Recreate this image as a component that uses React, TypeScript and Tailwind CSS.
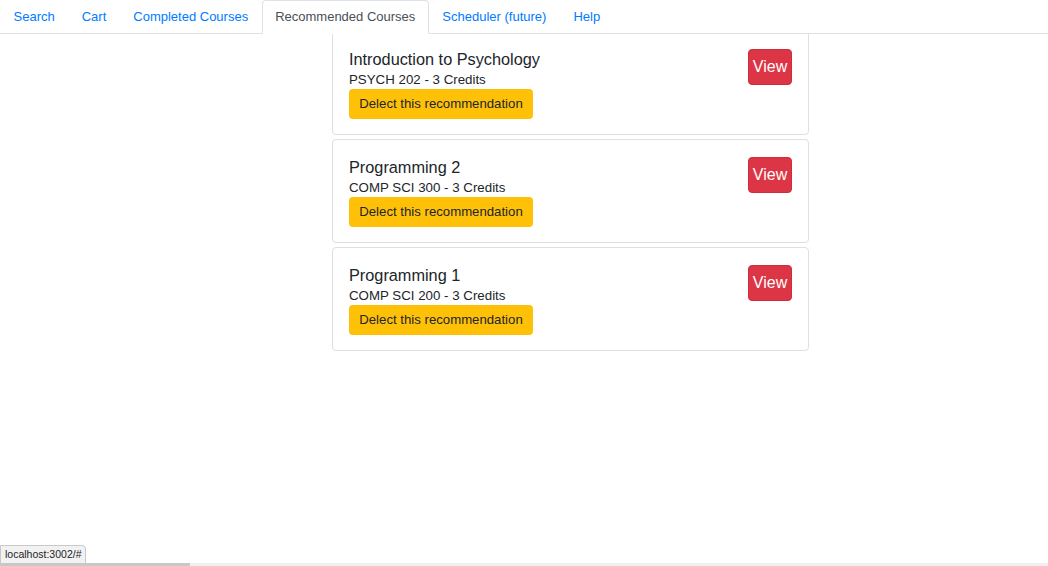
import React from "react";

const tabs = ["Search", "Cart", "Completed Courses", "Recommended Courses", "Scheduler (future)", "Help"];

const courses = [
  { name: "Introduction to Psychology", code: "PSYCH 202", credits: 3 },
  { name: "Programming 2", code: "COMP SCI 300", credits: 3 },
  { name: "Programming 1", code: "COMP SCI 200", credits: 3 },
];

const App = () => {
  return (
    <div
      className="relative h-[566px] w-[1048px] overflow-hidden bg-white text-[#212529]"
      style={{ fontFamily: '"Liberation Sans", Arial, sans-serif' }}
    >
      {/* Tabs */}
      <div className="relative z-10 flex h-[34px] border-b border-[#dee2e6] bg-white">
        {tabs.map((tab) => {
          const active = tab === "Recommended Courses";
          return (
            <a
              key={tab}
              href="#"
              className={
                active
                  ? "-mb-px flex h-[34px] items-center rounded-t border border-[#dee2e6] border-b-white bg-white px-[12.5px] text-[13px] text-[#495057]"
                  : "flex h-[33px] items-center border border-transparent px-[12.5px] text-[13px] text-[#007bff]"
              }
            >
              {tab}
            </a>
          );
        })}
      </div>

      {/* Recommended list */}
      <div className="-mt-[3px] flex flex-col gap-[4px] pl-[332px]">
        {courses.map((c) => (
          <div
            key={c.code}
            className="flex h-[104px] w-[477px] justify-between rounded border border-[#dfdfdf] bg-white px-4 pt-4"
          >
            <div className="flex flex-col">
              <div className="h-[22px] text-[16.3px] leading-[22px]">{c.name}</div>
              <div className="h-[19px] text-[13.3px] leading-[19px]">
                {c.code} - {c.credits} Credits
              </div>
              <button className="h-[30px] w-[184px] rounded bg-[#ffc107] text-[13.2px] text-[#212529]">
                Delect this recommendation
              </button>
            </div>
            <button className="mt-px h-[36px] w-[44px] rounded border border-[#d02c3c] bg-[#dc3545] text-[16px] text-white">
              View
            </button>
          </div>
        ))}
      </div>

      {/* Browser status overlay */}
      <div className="absolute bottom-[2px] left-0 rounded-tr border border-[#c9c9c9] bg-[#f2f2f2] px-[4px] py-[2px] text-[10.5px] leading-[13px] text-[#222]">
        localhost:3002/#
      </div>
      <div className="absolute bottom-0 left-0 flex h-[3px] w-full bg-[#f0f0f0]">
        <div className="h-full w-[190px] bg-[#c8c8c8]" />
      </div>
    </div>
  );
};

export default App;
